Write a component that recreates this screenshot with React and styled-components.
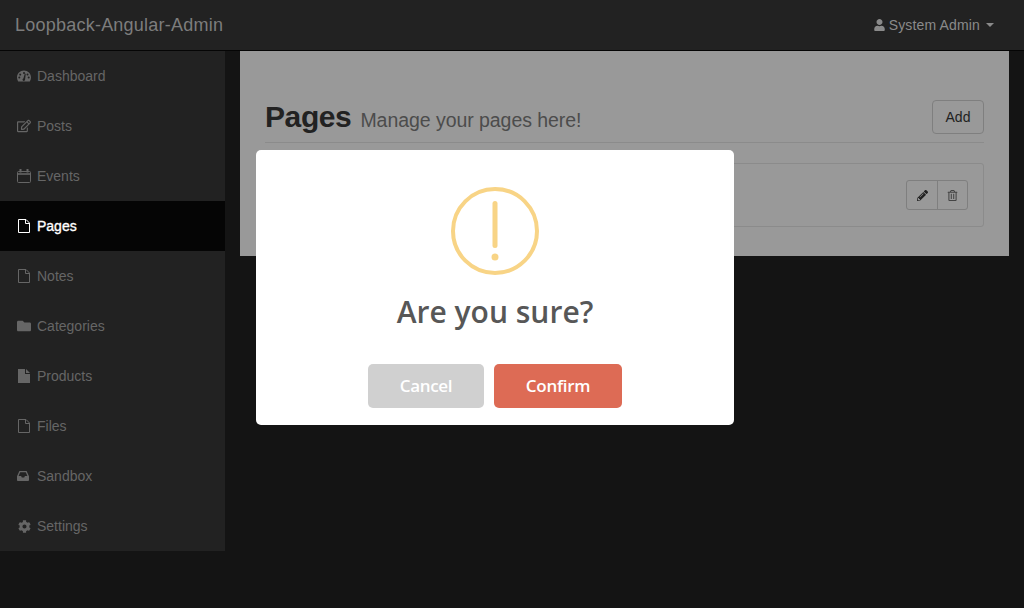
import React from 'react';
import styled, { createGlobalStyle } from 'styled-components';
import { FaRegEdit, FaFolder, FaCog, FaUser, FaPencilAlt, FaRegTrashAlt } from 'react-icons/fa';

const Global = createGlobalStyle`
  html, body { margin: 0; padding: 0; background: #141414; height: 100%; overflow: hidden; }
  body { font-family: "Liberation Sans", Arial, sans-serif; font-size: 14px; }
  * { box-sizing: border-box; }
`;
const Page = styled.div`
  position: relative;
  width: 1024px;
  height: 608px;
  background: #141414;
  overflow: hidden;
`;
const Navbar = styled.header`
  height: 51px;
  background: #222;
  border-bottom: 1px solid #050505;
  display: flex;
  align-items: center;
  justify-content: space-between;
  padding: 0 30px 0 15px;
`;
const Brand = styled.div`
  font-size: 18px;
  letter-spacing: .23px;
  color: #7d7d7d;
`;
const UserMenu = styled.div`
  display: flex;
  align-items: center;
  color: #8a8a8a;
  font-size: 14px;
  letter-spacing: .15px;
  svg { width: 11px; height: 12px; margin-right: 4px; }
`;
const Caret = styled.span`
  width: 0;
  height: 0;
  margin-left: 6px;
  border-top: 4px solid #8a8a8a;
  border-left: 4px solid transparent;
  border-right: 4px solid transparent;
`;
const Body = styled.div`
  display: flex;
  align-items: flex-start;
  gap: 15px;
`;
const Sidebar = styled.nav`
  width: 225px;
  background: #222;
  display: flex;
  flex-direction: column;
`;
const NavItem = styled.div`
  height: 50px;
  display: flex;
  align-items: center;
  padding-left: 17px;
  font-size: 14px;
  color: ${p => (p.$active ? '#fff' : '#666')};
  background: ${p => (p.$active ? '#050505' : 'transparent')};
  -webkit-text-stroke: ${p => (p.$active ? '.35px #fff' : '0')};
`;
const IconSlot = styled.span`
  width: 20px;
  display: flex;
  align-items: center;
  justify-content: flex-start;
  svg { display: block; }
`;
const Content = styled.main`
  width: 769px;
  height: 205px;
  background: #999;
  padding: 49px 25px 0;
`;
const Header = styled.div`
  height: 43px;
  display: flex;
  justify-content: space-between;
  align-items: flex-start;
  border-bottom: 1px solid #8b8b8b;
`;
const Title = styled.h1`
  margin: 0;
  font-size: 30px;
  letter-spacing: -.4px;
  line-height: 33px;
  font-weight: 600;
  color: #222;
  small {
    margin-left: 9px;
    font-size: 19.5px;
    letter-spacing: -.05px;
    font-weight: 400;
    color: #4c4c4c;
  }
`;
const AddButton = styled.div`
  width: 52px;
  height: 34px;
  border: 1px solid #7f7f7f;
  border-radius: 4px;
  display: flex;
  align-items: center;
  justify-content: center;
  color: #222;
  font-size: 14px;
`;
const Row = styled.div`
  margin-top: 20px;
  height: 64px;
  border: 1px solid #8b8b8b;
  border-radius: 3px;
  display: flex;
  align-items: center;
  justify-content: flex-end;
  padding-right: 15px;
`;
const BtnGroup = styled.div`
  display: flex;
  height: 30px;
  border: 1px solid #7f7f7f;
  border-radius: 3px;
`;
const GroupBtn = styled.div`
  width: 30px;
  display: flex;
  align-items: center;
  justify-content: center;
  color: ${p => (p.$dark ? '#222' : '#444')};
  & + & { border-left: 1px solid #7f7f7f; }
`;
const Modal = styled.div`
  position: absolute;
  left: 256px;
  top: 150px;
  width: 478px;
  height: 275px;
  background: #fff;
  border-radius: 5px;
  display: flex;
  flex-direction: column;
  align-items: center;
  padding-top: 37px;
  font-family: "Open Sans", sans-serif;
`;
const WarnIcon = styled.svg`
  width: 88px;
  height: 88px;
  display: block;
`;
const ModalTitle = styled.h2`
  margin: 17px 0 0;
  height: 40px;
  font-size: 30px;
  line-height: 40px;
  font-weight: 600;
  color: #575757;
`;
const Actions = styled.div`
  display: flex;
  gap: 10px;
  margin-top: 32px;
`;
const ModalButton = styled.div`
  width: ${p => p.$w}px;
  height: 44px;
  padding-bottom: 2px;
  border-radius: 5px;
  background: ${p => p.$bg};
  color: #fff;
  font-size: 17px;
  font-weight: 600;
  letter-spacing: -.3px;
  display: flex;
  align-items: center;
  justify-content: center;
`;

const Dashboard = () => (
  <svg width="14" height="12" viewBox="0 0 14 12" fill="currentColor">
    <path fillRule="evenodd" d="M7 .6C3.100.6 0 3.700 0 7.600c0 1.500.4 2.700 1.200 3.800h11.600c.8-1.100 1.200-2.300 1.200-3.800 0-3.900-3.100-7-7-7zM2.300 8.600a1 1 0 1 1 0-2 1 1 0 0 1 0 2zM3.500 5.600a1 1 0 1 1 .1-1.900 1 1 0 0 1-.1 1.900zM7 4a1 1 0 1 1 0-2 1 1 0 0 1 0 2zM8.100 9.300a1.300 1.300 0 1 1-1.700-.9l1.300-4.500c.2-.5 1.100-.3 1 .3zM10.500 5.600a1 1 0 1 1 0-2 1 1 0 0 1 0 2zM11.700 8.600a1 1 0 1 1 0-2 1 1 0 0 1 0 2z" />
  </svg>
);
const Calendar = () => (
  <svg width="14" height="14" viewBox="0 0 14 14" fill="none" stroke="currentColor">
    <rect x=".5" y="2.500" width="13" height="11" rx="1" />
    <path d="M.5 5h13" strokeWidth="1.600" />
    <path d="M3.500 0v3.500M10.500 0v3.500" strokeWidth="2" />
  </svg>
);
const Inbox = () => (
  <svg width="12" height="10" viewBox="0 0 12 10" fill="currentColor">
    <path fillRule="evenodd" d="M2.400 0h7.200L12 5.200V9c0 .5-.4 1-1 1H1c-.6 0-1-.5-1-1V5.200zM3.200 1.200 1.600 5h2.500l.7 1.500h2.400L7.900 5h2.500L8.800 1.200z" />
  </svg>
);
const FileOutline = () => (
  <svg width="14" height="14" viewBox="0 0 14 14" fill="none" stroke="currentColor" strokeWidth="1">
    <path d="M1.500 .5h7.500l3.500 3.500v9.500h-11z" />
    <path d="M8.500 .5v4h4" />
  </svg>
);
const FileSolid = () => (
  <svg width="14" height="14" viewBox="0 0 14 14" fill="currentColor">
    <path d="M1 0h7v5h5v9H1z" />
    <path d="M9 0l4 4H9z" />
  </svg>
);

const items = [
  ['Dashboard', <Dashboard />],
  ['Posts', <FaRegEdit size={14} />],
  ['Events', <Calendar />],
  ['Pages', <FileOutline />, true],
  ['Notes', <FileOutline />],
  ['Categories', <FaFolder size={14} />],
  ['Products', <FileSolid />],
  ['Files', <FileOutline />],
  ['Sandbox', <Inbox />],
  ['Settings', <FaCog size={13} style={{ marginLeft: 1 }} />],
];

export default function App() {
  return (
    <Page>
      <Global />
      <Navbar>
        <Brand>Loopback-Angular-Admin</Brand>
        <UserMenu><FaUser />System Admin<Caret /></UserMenu>
      </Navbar>
      <Body>
        <Sidebar>
          {items.map(([label, icon, active]) => (
            <NavItem key={label} $active={active}>
              <IconSlot>{icon}</IconSlot>{label}
            </NavItem>
          ))}
        </Sidebar>
        <Content>
          <Header>
            <Title>Pages<small>Manage your pages here!</small></Title>
            <AddButton>Add</AddButton>
          </Header>
          <Row>
            <BtnGroup>
              <GroupBtn $dark><FaPencilAlt size={11} /></GroupBtn>
              <GroupBtn><FaRegTrashAlt size={11} /></GroupBtn>
            </BtnGroup>
          </Row>
        </Content>
      </Body>
      <Modal>
        <WarnIcon viewBox="0 0 88 88">
          <circle cx="44" cy="44" r="42" fill="none" stroke="#f8d486" strokeWidth="4" />
          <rect x="41.500" y="14" width="5" height="47" rx="2.500" fill="#f8d486" />
          <circle cx="44" cy="70" r="3.500" fill="#f8d486" />
        </WarnIcon>
        <ModalTitle>Are you sure?</ModalTitle>
        <Actions>
          <ModalButton $w={116} $bg="#d0d0d0">Cancel</ModalButton>
          <ModalButton $w={128} $bg="#dd6b55">Confirm</ModalButton>
        </Actions>
      </Modal>
    </Page>
  );
}
